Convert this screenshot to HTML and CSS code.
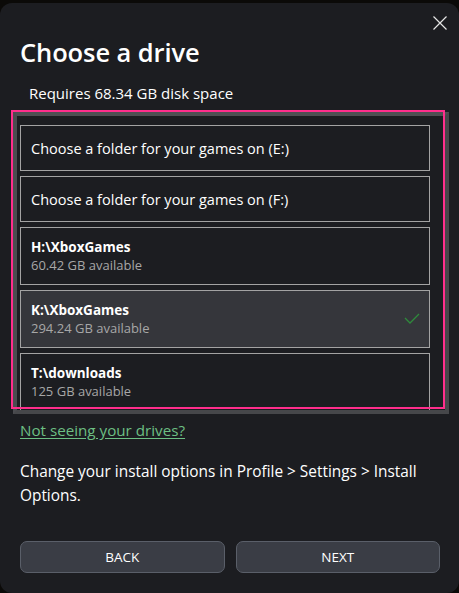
FILE: index.html
```html
<!DOCTYPE html>
<html>
<head>
<meta charset="utf-8">
<link rel="stylesheet" href="styles.css">
</head>
<body>
<div class="dialog">
  <button class="close" aria-label="Close">
    <svg width="14" height="14" viewBox="0 0 14 14"><path d="M0.5 0.5 L13.5 13.5 M13.5 0.5 L0.5 13.5" stroke="#e6e6e6" stroke-width="1.2" fill="none"/></svg>
  </button>
  <h1 class="title">Choose a drive</h1>
  <p class="requires">Requires 68.34 GB disk space</p>
  <div class="list-wrap">
    <div class="scroller">
      <div class="item item-folder">Choose a folder for your games on (E:)</div>
      <div class="item item-folder">Choose a folder for your games on (F:)</div>
      <div class="item item-drive">
        <div class="drive-text"><div class="drive-name">H:\XboxGames</div><div class="drive-space">60.42 GB available</div></div>
      </div>
      <div class="item item-drive selected">
        <div class="drive-text"><div class="drive-name">K:\XboxGames</div><div class="drive-space">294.24 GB available</div></div>
        <svg class="check" width="16" height="12" viewBox="0 0 16 12"><polyline points="1,5 6,10 15,1" fill="none" stroke="#2f8a3c" stroke-width="1.3"/></svg>
      </div>
      <div class="item item-drive">
        <div class="drive-text"><div class="drive-name">T:\downloads</div><div class="drive-space">125 GB available</div></div>
      </div>
    </div>
    <div class="highlight"></div>
  </div>
  <a class="link" href="#">Not seeing your drives?</a>
  <p class="info">Change your install options in Profile &gt; Settings &gt; Install Options.</p>
  <div class="buttons">
    <button class="btn">BACK</button>
    <button class="btn">NEXT</button>
  </div>
</div>
</body>
</html>
```

FILE: styles.css
```css
html, body {
  margin: 0;
  padding: 0;
  background: #0b0a08;
  height: 593px;
  overflow: hidden;
}
body {
  font-family: "Open Sans", "Noto Sans", sans-serif;
  color: #ffffff;
}
.dialog {
  position: relative;
  margin-top: 3px;
  height: 590px;
  box-sizing: border-box;
  background: #1c1d21;
  border-radius: 12px;
  padding: 0 0 0 20px;
  display: flex;
  flex-direction: column;
}
.close {
  position: absolute;
  top: 13px;
  right: 12px;
  background: none;
  border: 0;
  padding: 0;
  width: 14px;
  height: 14px;
  display: flex;
}
.title {
  margin: 32px 0 0 0;
  font-size: 25.5px;
  font-weight: 600;
  line-height: 34px;
  letter-spacing: -0.1px;
}
.requires {
  margin: 14px 0 0 9px;
  font-size: 15px;
  line-height: 20px;
}
.list-wrap {
  position: relative;
  margin: 9px 0 0 -7px;
  width: 436px;
  height: 302px;
}
.scroller {
  box-sizing: border-box;
  width: 436px;
  height: 302px;
  border: 4px solid #46474a;
  border-top-color: #4e4f52;
  border-left-color: #4b4c50;
  padding: 9px 15px 0 3px;
  overflow: hidden;
  display: flex;
  flex-direction: column;
  gap: 5px;
}
.highlight {
  position: absolute;
  left: -2px;
  top: -2px;
  width: 430px;
  height: 295px;
  border: 2px solid #ff2e8c;
  pointer-events: none;
}
.item {
  flex: none;
  box-sizing: border-box;
  width: 410px;
  border: 1px solid #a3a3a3;
  display: flex;
  align-items: center;
  padding: 0 10px;
}
.item-folder {
  height: 46px;
  font-size: 14.5px;
}
.item-drive {
  height: 58px;
  justify-content: space-between;
}
.selected {
  background: #35363b;
}
.drive-name {
  font-size: 13.5px;
  font-weight: 700;
  line-height: 18px;
}
.drive-space {
  font-size: 13px;
  color: #a7a7a7;
  line-height: 19px;
}
.check {
  margin-right: -1px;
}
.link {
  align-self: flex-start;
  margin-top: 5px;
  color: #6cbf83;
  font-size: 15.2px;
  line-height: 22px;
  text-decoration: underline;
  text-underline-offset: 2px;
}
.info {
  margin: 19px 20px 0 0;
  font-size: 15.4px;
  line-height: 24px;
}
.buttons {
  margin-top: auto;
  margin-bottom: 20px;
  display: flex;
  gap: 11px;
  padding-right: 19px;
}
.btn {
  flex: 1;
  height: 32px;
  background: #3a3d45;
  border: 1px solid #5a5f69;
  border-radius: 7px;
  color: #ffffff;
  font-family: "Open Sans", "Noto Sans", sans-serif;
  font-size: 13.5px;
}
```
